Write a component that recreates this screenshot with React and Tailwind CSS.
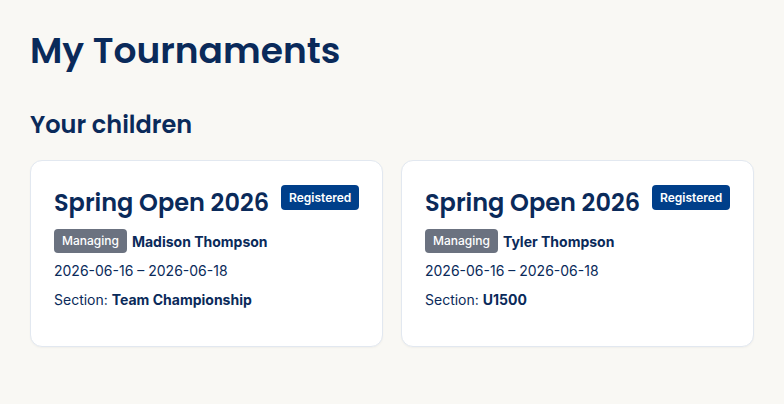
const cards = [
  { name: "Madison Thompson", section: "Team Championship" },
  { name: "Tyler Thompson", section: "U1500" },
];

const heading = { fontFamily: "Poppins, 'Open Sans', sans-serif" };

function TournamentCard({ name, section }) {
  return (
    <div className="rounded-xl border border-[#e2e8f0] bg-white pl-[23px] pr-6 pt-6 pb-[36px] shadow-[0_1px_2px_rgba(0,0,0,0.04)]">
      <div className="flex items-start gap-3">
        <h3
          className="shrink-0 whitespace-nowrap text-[24px] font-semibold leading-[36px] text-[#0a2a5a]"
          style={heading}
        >
          Spring Open 2026
        </h3>
        <span className="flex h-[25px] shrink-0 items-center rounded-[4px] bg-[#003f8a] px-2 text-[12px] font-semibold text-white">
          Registered
        </span>
      </div>
      <div className="mt-2 flex items-center gap-[5px]">
        <span className="flex h-6 items-center rounded-[4px] bg-[#6b7280] px-2 text-[12px] font-medium text-white">
          Managing
        </span>
        <span className="text-[14px] font-bold text-[#0a2a5a]">{name}</span>
      </div>
      <p className="mt-2 text-[14px] leading-5 text-[#0a2a5a]">2026-06-16 – 2026-06-18</p>
      <p className="mt-[9px] text-[14px] leading-5 text-[#0a2a5a]">
        Section: <strong className="font-bold">{section}</strong>
      </p>
    </div>
  );
}

export default function App() {
  return (
    <div
      className="min-h-[404px] bg-[#f9f8f4] px-[30px] pt-[27px]"
      style={{ fontFamily: "Inter, 'Liberation Sans', sans-serif" }}
    >
      <h1 className="text-[36px] font-semibold leading-[48px] text-[#0a2a5a]" style={heading}>
        My Tournaments
      </h1>
      <h2 className="mt-[34px] text-[24px] font-semibold leading-8 text-[#0a2a5a]" style={heading}>
        Your children
      </h2>
      <div className="mt-[19px] grid grid-cols-2 gap-[18px]">
        {cards.map((c) => (
          <TournamentCard key={c.name} {...c} />
        ))}
      </div>
    </div>
  );
}
